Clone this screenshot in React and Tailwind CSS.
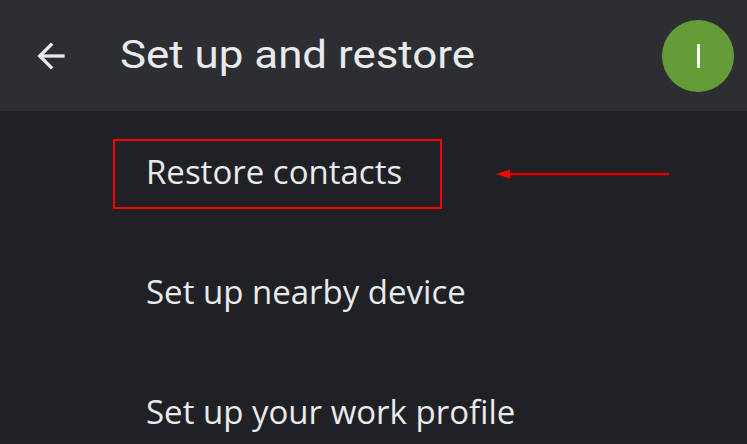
import React from "react";

const items = ["Restore contacts", "Set up nearby device", "Set up your work profile"];

function BackArrow() {
  return (
    <svg width="36" height="36" viewBox="0 0 24 24" fill="none" stroke="#e8eaed" strokeWidth="2.2" strokeLinecap="square">
      <path d="M20 12H5" />
      <path d="M12 4.5 4.5 12 12 19.5" />
    </svg>
  );
}

export default function App() {
  return (
    <div className="w-[747px] h-[444px] overflow-hidden bg-[#202124] text-[#e8eaed]">
      <div className="h-[111px] bg-[#2d2e31] flex items-center">
        <div className="ml-[33px] flex items-center">
          <BackArrow />
        </div>
        <h1 className="ml-[51px] text-[39px] font-['Roboto',sans-serif] leading-none scale-x-[1.125] origin-left">
          Set up and restore
        </h1>
        <div className="ml-auto mr-[13px] w-[72px] h-[72px] rounded-full bg-[#659c38] flex items-center justify-center">
          <span className="block w-[3px] h-[24px] bg-white" />
        </div>
      </div>
      <div className="pt-[3px] font-['Open_Sans',sans-serif]">
        {items.map((label, i) => (
          <div key={label} className="h-[120px] flex items-center">
            {i === 0 ? (
              <div className="flex items-center w-full">
                <div className="ml-[113px] w-[329px] h-[70px] border-2 border-[#ff0000] flex items-center pl-[31px] pb-[6px]">
                  <span className="text-[33px] leading-none">{label}</span>
                </div>
                <svg className="ml-[54px]" width="174" height="12" viewBox="0 0 174 12">
                  <line x1="12" y1="6" x2="173" y2="6" stroke="#e00000" strokeWidth="2.5" />
                  <path d="M0 6 14 1.5 14 10.5Z" fill="#ff0000" />
                </svg>
              </div>
            ) : (
              <span className="ml-[146px] pb-[6px] text-[33px] leading-none">{label}</span>
            )}
          </div>
        ))}
      </div>
    </div>
  );
}
